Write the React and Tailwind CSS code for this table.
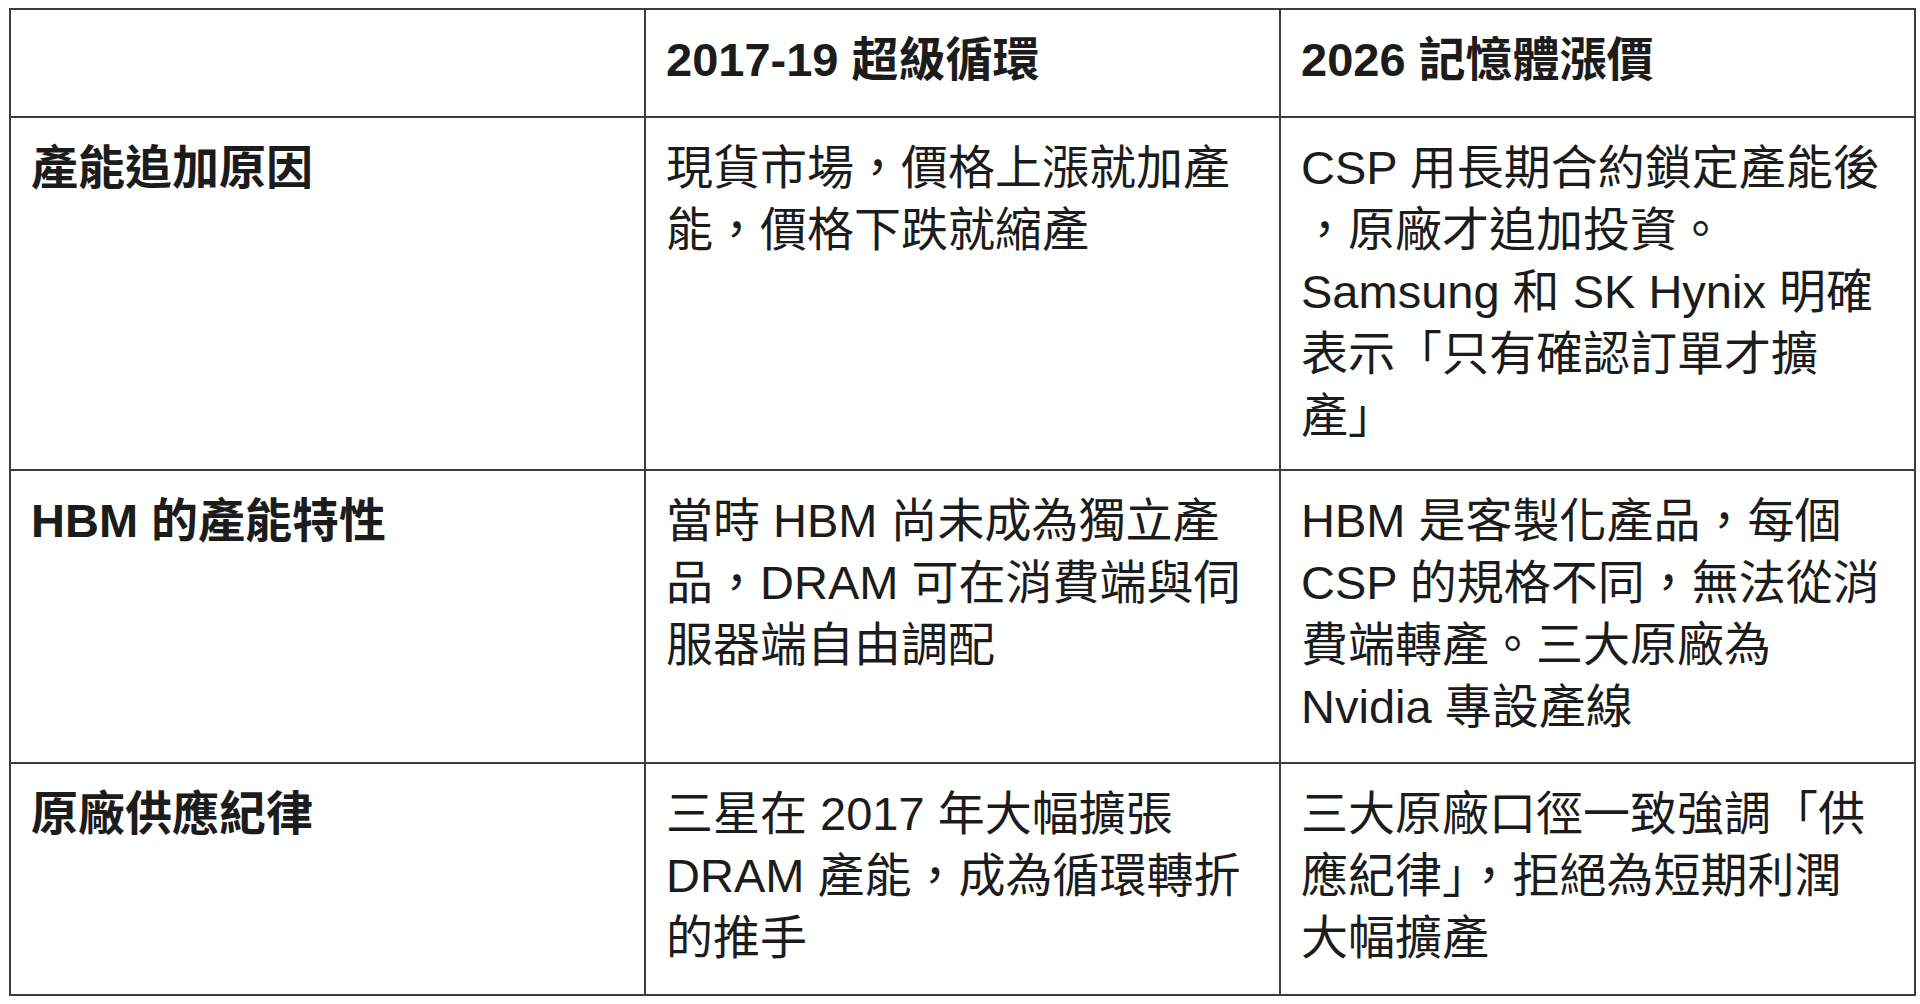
const rows = [
  {
    label: "產能追加原因",
    before: ["現貨市場，價格上漲就加產", "能，價格下跌就縮產"],
    after: [
      "CSP 用長期合約鎖定產能後",
      "，原廠才追加投資。",
      "Samsung 和 SK Hynix 明確",
      "表示「只有確認訂單才擴",
      "產」",
    ],
    h: "h-[353px]",
  },
  {
    label: "HBM 的產能特性",
    before: ["當時 HBM 尚未成為獨立產", "品，DRAM 可在消費端與伺", "服器端自由調配"],
    after: ["HBM 是客製化產品，每個", "CSP 的規格不同，無法從消", "費端轉產。三大原廠為", "Nvidia 專設產線"],
    h: "h-[293px]",
  },
  {
    label: "原廠供應紀律",
    before: ["三星在 2017 年大幅擴張", "DRAM 產能，成為循環轉折", "的推手"],
    after: ["三大原廠口徑一致強調「供", "應紀律」，拒絕為短期利潤", "大幅擴產"],
    h: "h-[232px]",
  },
];

function Lines({ lines }) {
  return lines.map((line, i) => (
    <div key={i} className="whitespace-nowrap">
      {line}
    </div>
  ));
}

const cell = "border-2 border-[#3d3d3d] align-top px-[20px] pt-[19px]";

export default function App() {
  return (
    <div
      className="bg-white pl-[9px] pt-[8px] text-[47px] leading-[62px] text-[#1c1c1c]"
      style={{ fontFamily: '"Liberation Sans", Arial, "Noto Sans CJK TC", sans-serif' }}
    >
      <table className="w-[1905px] table-fixed border-collapse">
        <colgroup>
          <col className="w-[635px]" />
          <col className="w-[635px]" />
          <col className="w-[635px]" />
        </colgroup>
        <thead>
          <tr className="h-[108px]">
            <th className={cell}></th>
            <th className={`${cell} text-left font-bold`}>2017-19 超級循環</th>
            <th className={`${cell} text-left font-bold`}>2026 記憶體漲價</th>
          </tr>
        </thead>
        <tbody>
          {rows.map((r) => (
            <tr key={r.label} className={r.h}>
              <td className={`${cell} font-bold`}>{r.label}</td>
              <td className={cell}>
                <Lines lines={r.before} />
              </td>
              <td className={cell}>
                <Lines lines={r.after} />
              </td>
            </tr>
          ))}
        </tbody>
      </table>
    </div>
  );
}
